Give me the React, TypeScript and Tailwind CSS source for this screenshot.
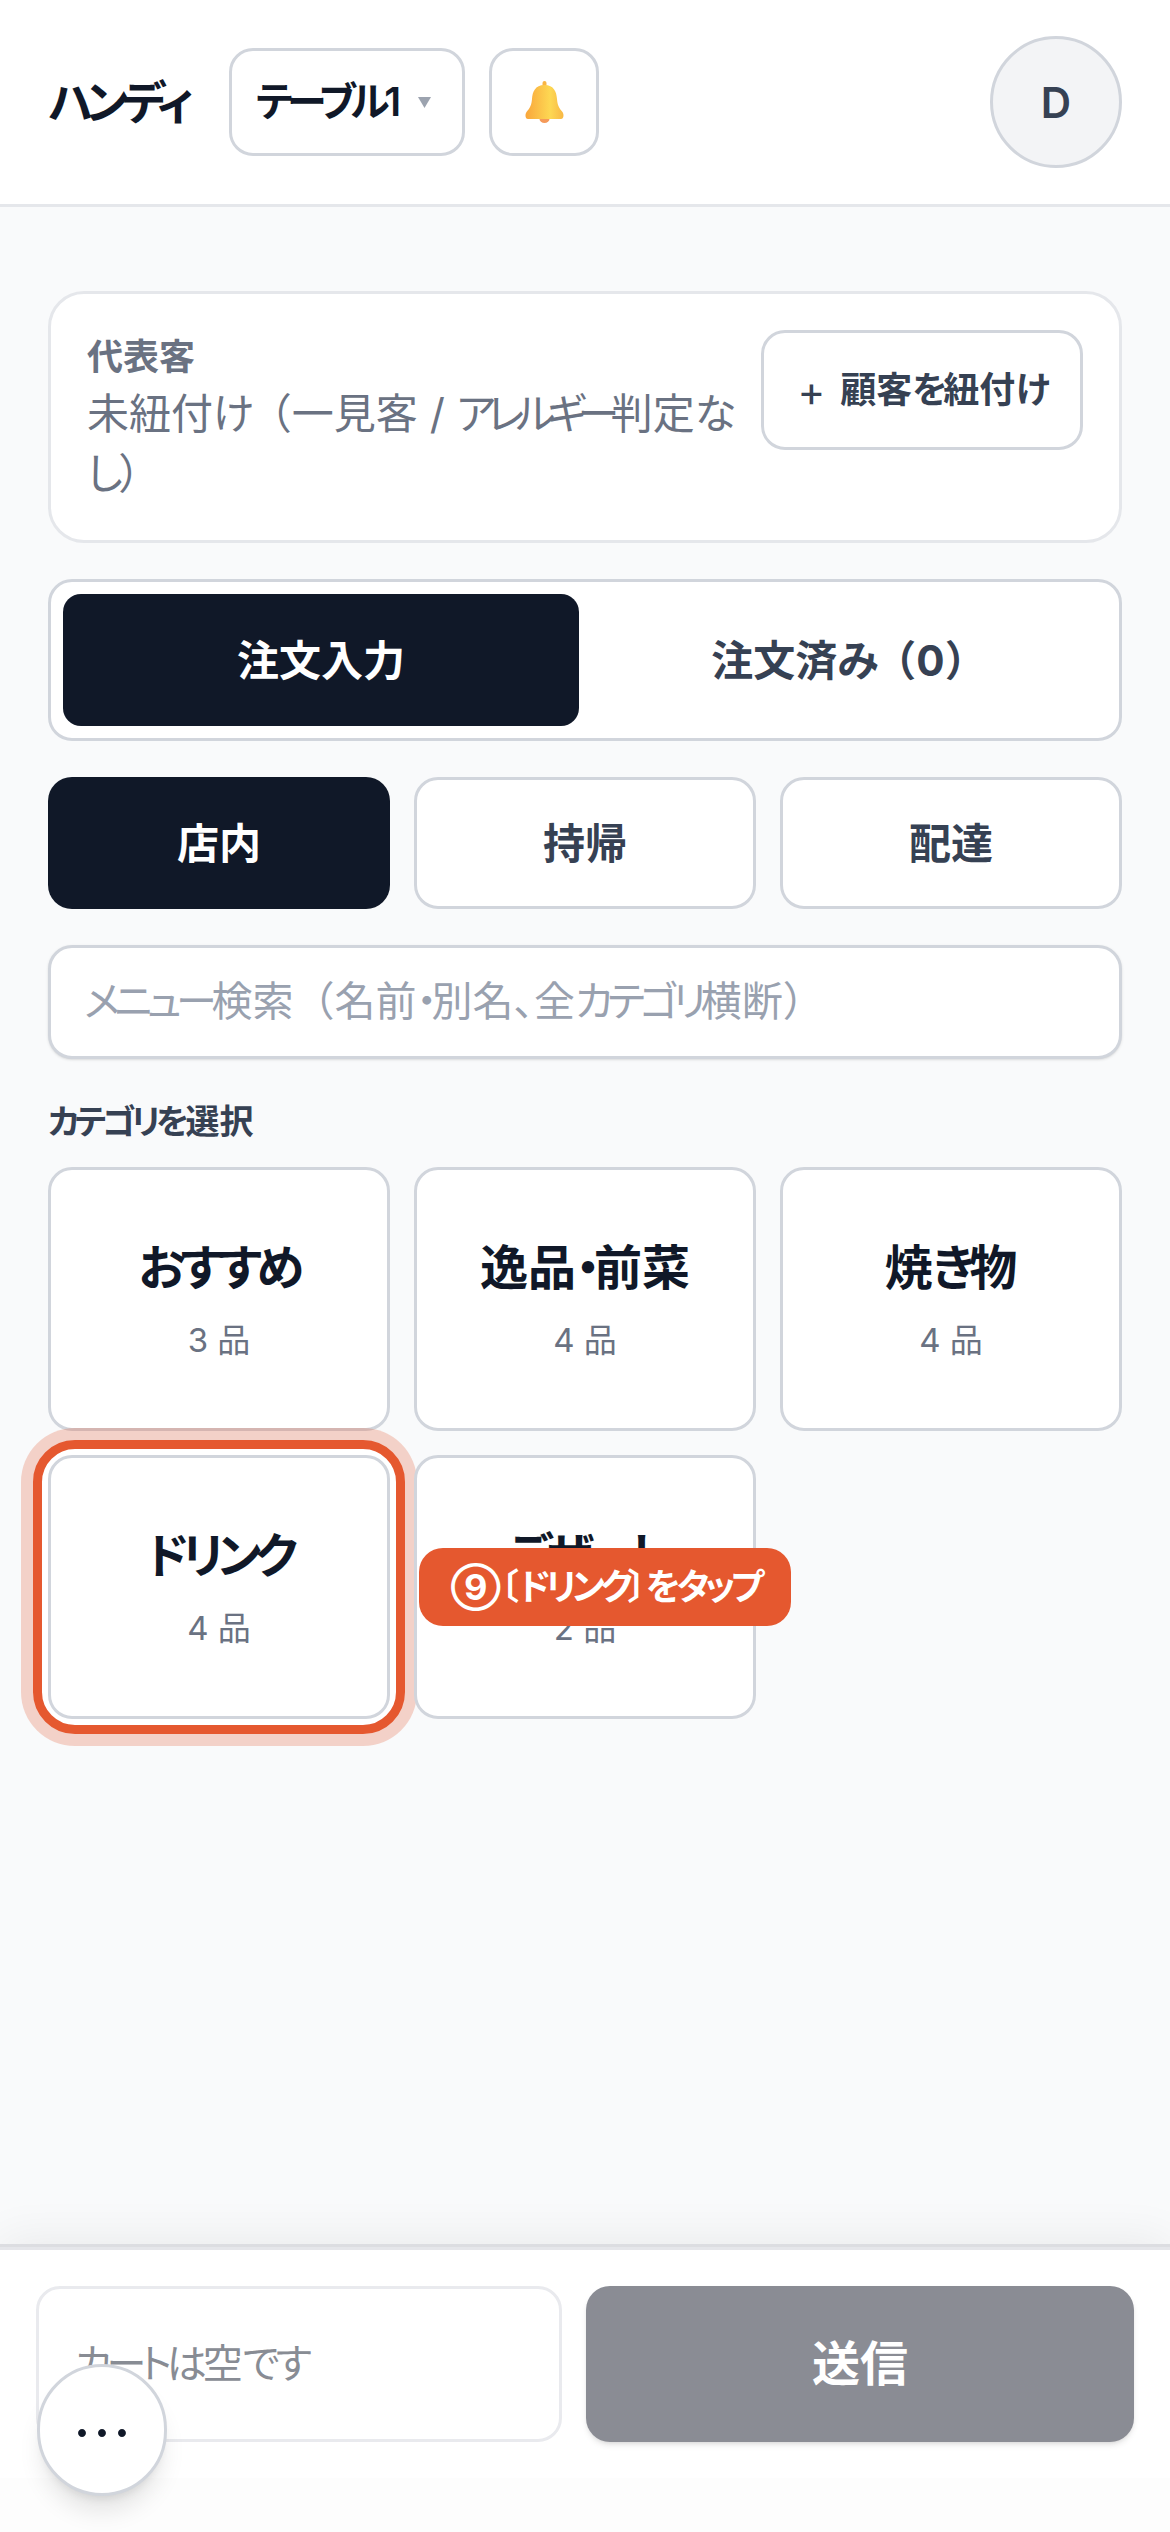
import { Fragment } from 'react';

const categories = [
  { name: 'おすすめ', count: 3 },
  { name: '逸品・前菜', count: 4 },
  { name: '焼き物', count: 4 },
  { name: 'ドリンク', count: 4, highlighted: true },
  { name: 'デザート', count: 2, tip: true },
];

// the reference's kana are much narrower than Noto's, so tighten them run by run
function Jp({ text }: { text: string }) {
  const runs = text.match(/[\u30a0-\u30ff]+|[\u3040-\u309f]+|[（）]|[^\u3040-\u30ff（）]+/g) ?? [];
  return (
    <>
      {runs.map((run, i) => {
        if (/^[\u30a0-\u30ff]/.test(run)) {
          return <span key={i} className="tracking-[-0.13em]">{run}</span>;
        }
        if (/^[\u3040-\u309f]/.test(run)) {
          return <span key={i} className="tracking-[-0.1em]">{run}</span>;
        }
        if (/^[（）]/.test(run)) {
          return <span key={i} className="[font-feature-settings:normal]">{run}</span>;
        }
        return <Fragment key={i}>{run}</Fragment>;
      })}
    </>
  );
}

function Bell() {
  return (
    <svg width="39" height="42" viewBox="0 0 39 42">
      <defs>
        <linearGradient id="bellBody" x1="0" y1="0" x2="1" y2="0">
          <stop offset="0" stopColor="#f9a63c" />
          <stop offset="0.65" stopColor="#fdd853" />
          <stop offset="1" stopColor="#f8b845" />
        </linearGradient>
      </defs>
      <ellipse cx="19.5" cy="38" rx="5" ry="4" fill="#f59a5a" />
      <rect x="17.5" y="0" width="4" height="6" rx="2" fill="#f9b544" />
      <path
        d="M19.5 4C10 4 7.5 11 7 18C6.6 24 5 27 1.5 31C0 33 0 38 3 38H36C39 38 39 33 37.5 31C34 27 32.4 24 32 18C31.5 11 29 4 19.5 4Z"
        fill="url(#bellBody)"
      />
    </svg>
  );
}

export default function App() {
  return (
    <div className="relative flex h-[2532px] w-[1170px] flex-col overflow-hidden bg-[#f9fafb] font-[Inter,'Noto_Sans_CJK_JP',sans-serif] [font-feature-settings:'palt']">
      <header className="flex h-[207px] items-center border-b-[3px] border-gray-200 bg-white px-[48px]">
        <span className="w-[145px] text-[46px] font-bold text-gray-900"><Jp text="ハンディ" /></span>
        <div className="ml-[36px] flex h-[108px] w-[236px] items-center rounded-[24px] border-[3px] border-gray-300 bg-white pl-[24px]">
          <span className="text-[40px] font-semibold tracking-[-0.03em] text-gray-900"><Jp text="テーブル" />1</span>
          <svg className="ml-[18px]" width="13" height="11" viewBox="0 0 13 11">
            <polygon points="0,0 13,0 6.5,11" fill="#9ca3af" />
          </svg>
        </div>
        <div className="ml-[24px] flex h-[108px] w-[110px] items-center justify-center rounded-[24px] border-[3px] border-gray-300 bg-white">
          <Bell />
        </div>
        <div className="ml-auto flex h-[132px] w-[132px] items-center justify-center rounded-full border-[3px] border-gray-300 bg-gray-100 text-[42px] font-semibold text-gray-700">
          D
        </div>
      </header>

      <main className="flex flex-1 flex-col px-[48px] pt-[84px]">
        <section className="flex h-[252px] items-start gap-[12px] rounded-[36px] border-[3px] border-gray-200 bg-white p-[36px]">
          <div className="flex-1">
            <div className="text-[36px] leading-[54px] font-semibold text-gray-500">代表客</div>
            <div className="text-[42px] leading-[60px] text-gray-500">
              <Jp text="未紐付け（一見客 / " />
              <span className="tracking-[-0.2em]">アレルギー</span>
              <Jp text="判定なし）" />
            </div>
          </div>
          <button className="flex h-[120px] w-[322px] shrink-0 items-center justify-center gap-[15px] rounded-[24px] border-[3px] border-gray-300 bg-white text-[36px] font-semibold text-gray-700">
            <span className="text-[42px] font-normal">+</span>
            <span><Jp text="顧客を紐付け" /></span>
          </button>
        </section>

        <div className="mt-[36px] grid h-[162px] grid-cols-2 gap-[12px] rounded-[24px] border-[3px] border-gray-300 bg-white p-[12px]">
          <div className="flex items-center justify-center rounded-[18px] bg-gray-900 text-[42px] font-bold text-white">注文入力</div>
          <div className="flex items-center justify-center rounded-[18px] text-[42px] font-bold text-gray-700"><span><Jp text="注文済み（0）" /></span></div>
        </div>

        <div className="mt-[36px] grid grid-cols-3 gap-[24px]">
          <div className="flex h-[132px] items-center justify-center rounded-[24px] bg-gray-900 text-[42px] font-bold text-white">店内</div>
          <div className="flex h-[132px] items-center justify-center rounded-[24px] border-[3px] border-gray-300 bg-white text-[42px] font-bold text-gray-700">持帰</div>
          <div className="flex h-[132px] items-center justify-center rounded-[24px] border-[3px] border-gray-300 bg-white text-[42px] font-bold text-gray-700">配達</div>
        </div>

        <div className="mt-[36px] flex h-[114px] items-center rounded-[24px] border-[3px] border-gray-300 bg-white px-[33px] text-[41px] text-gray-400 shadow-sm">
          <span><Jp text="メニュー検索（名前・別名、全カテゴリ横断）" /></span>
        </div>

        <div className="mt-[36px] text-[34px] leading-[54px] font-semibold text-gray-700"><Jp text="カテゴリを選択" /></div>

        <div className="mt-[18px] grid grid-cols-3 gap-[24px]">
          {categories.map((c) => (
            <div key={c.name} className="relative">
              {c.highlighted && (
                <div className="absolute -inset-[15px] rounded-[42px] border-[9px] border-[#e5582f] bg-white shadow-[0_0_0_12px_rgba(229,88,47,0.25)]" />
              )}
              <div className="relative flex h-[264px] flex-col items-center justify-center rounded-[24px] border-[3px] border-gray-300 bg-white">
                <div className="text-[48px] leading-[72px] font-semibold text-gray-900"><Jp text={c.name} /></div>
                <div className="mt-[9px] text-[33px] leading-[54px] text-gray-500">{c.count} 品</div>
              </div>
              {c.tip && (
                <div className="absolute top-[93px] left-[5px] flex h-[78px] w-[372px] items-center justify-center rounded-[24px] bg-[#e5582f] text-[36px] font-bold whitespace-nowrap text-white">
                  <span><Jp text="⑨〔ドリンク〕をタップ" /></span>
                </div>
              )}
            </div>
          ))}
        </div>
      </main>

      <footer className="flex gap-[24px] border-t-[3px] border-[#e5e6ea] bg-white px-[36px] py-[36px] shadow-[0_-3px_0_#dcdde1,0_-6px_45px_rgba(0,0,0,0.07)]">
        <div className="flex h-[156px] w-[526px] items-center rounded-[24px] border-[3px] border-[#e9eaee] px-[36px] text-[40px] text-[#888c94]">
          <span><Jp text="カートは空です" /></span>
        </div>
        <div className="flex h-[156px] flex-1 items-center justify-center rounded-[24px] bg-[#8a8c94] text-[48px] font-bold text-white shadow-md">送信</div>
      </footer>
      <div className="h-[54px] bg-[#fdfdfd]"></div>

      <button className="absolute top-[2364px] left-[37px] flex h-[132px] w-[130px] items-center justify-center rounded-full border-[3px] border-gray-300 bg-white font-['Noto_Sans_CJK_JP',sans-serif] text-[60px] font-normal text-gray-900 shadow-xl [font-feature-settings:normal]">
        …
      </button>
    </div>
  );
}
